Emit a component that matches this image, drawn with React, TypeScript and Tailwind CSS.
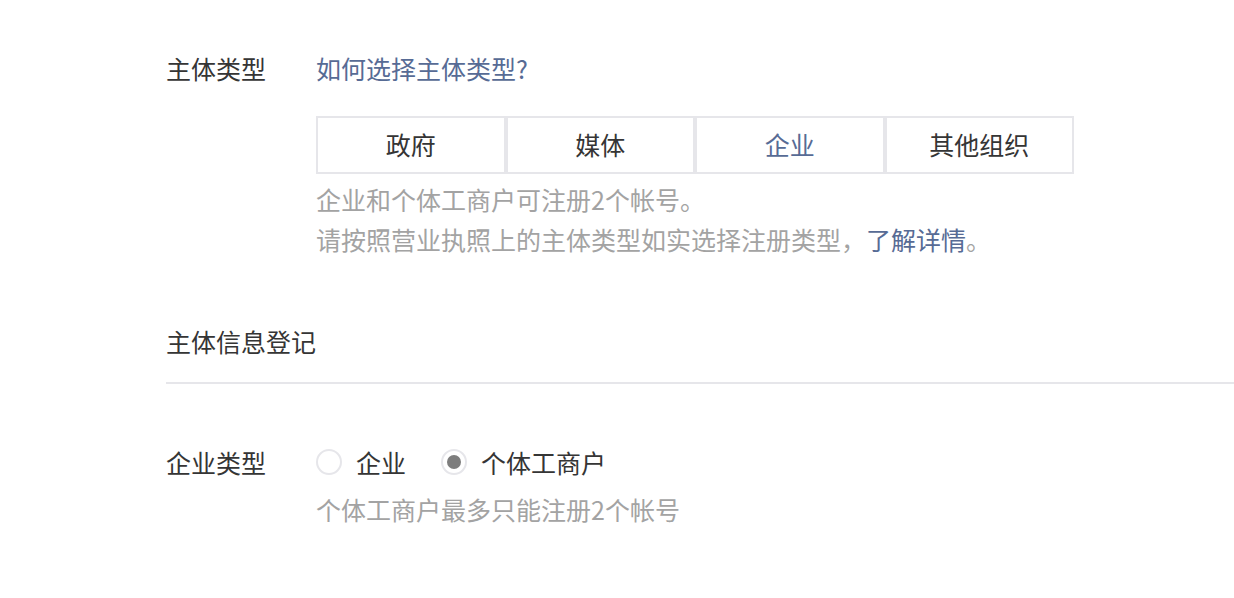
import React from 'react';

const tabs = ['政府', '媒体', '企业', '其他组织'];

const Radio = ({ checked, label }: { checked?: boolean; label: string }) => (
    <label className="flex items-center">
        <span className="w-[26px] h-[26px] rounded-full border-2 border-[#e6e6ea] flex items-center justify-center">
            {checked && <span className="w-[14px] h-[14px] rounded-full bg-[#7d7d7d]"></span>}
        </span>
        <span className="ml-[14px]">{label}</span>
    </label>
);

const App = () => {
    const active = '企业';

    return (
        <div
            className="min-h-[598px] bg-white pl-[166px] pt-[48px] text-[25px] text-[#353535]"
            style={{ fontFamily: '"Noto Sans CJK SC", "Noto Sans", sans-serif' }}
        >
            {/* 主体类型 */}
            <div className="flex">
                <div className="w-[150px] leading-[40px]">主体类型</div>
                <div>
                    <a className="block leading-[40px] text-[#576b95]">如何选择主体类型?</a>
                    <div className="flex w-[758px] mt-[28px]">
                        {tabs.map((t) => (
                            <div
                                key={t}
                                className={
                                    'flex-1 h-[58px] border-2 border-[#e6e6ea] flex items-center justify-center ' +
                                    (t === active ? 'text-[#576b95]' : '')
                                }
                            >
                                {t}
                            </div>
                        ))}
                    </div>
                    <div className="mt-[5px] leading-[40px] text-[#a3a3a3]">
                        <p>企业和个体工商户可注册2个帐号。</p>
                        <p>
                            请按照营业执照上的主体类型如实选择注册类型，
                            <a className="text-[#576b95]">了解详情</a>。
                        </p>
                    </div>
                </div>
            </div>

            {/* 主体信息登记 */}
            <h3 className="mt-[62px] leading-[40px]">主体信息登记</h3>
            <div className="mt-[21px] h-[2px] bg-[#e6e6ea]"></div>

            {/* 企业类型 */}
            <div className="flex mt-[58px]">
                <div className="w-[150px] leading-[40px]">企业类型</div>
                <div>
                    <div className="flex items-center gap-[35px] leading-[40px]">
                        <Radio label="企业" />
                        <Radio checked label="个体工商户" />
                    </div>
                    <p className="mt-[7px] leading-[40px] text-[#a3a3a3]">个体工商户最多只能注册2个帐号</p>
                </div>
            </div>
        </div>
    );
};

export default App;
